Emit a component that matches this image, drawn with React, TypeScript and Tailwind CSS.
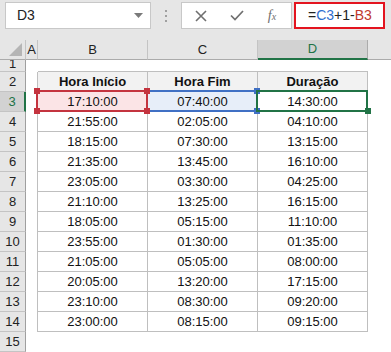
import React from "react";

const data: [string, string, string][] = [
  ["17:10:00", "07:40:00", "14:30:00"],
  ["21:55:00", "02:05:00", "04:10:00"],
  ["18:15:00", "07:30:00", "13:15:00"],
  ["21:35:00", "13:45:00", "16:10:00"],
  ["23:05:00", "03:30:00", "04:25:00"],
  ["21:10:00", "13:25:00", "16:15:00"],
  ["18:05:00", "05:15:00", "11:10:00"],
  ["23:55:00", "01:30:00", "01:35:00"],
  ["21:05:00", "05:05:00", "08:00:00"],
  ["20:05:00", "13:20:00", "17:15:00"],
  ["23:10:00", "08:30:00", "09:20:00"],
  ["23:00:00", "08:15:00", "09:15:00"],
];

function Handle({ pos, color }: { pos: string; color: string }) {
  return <div className={`absolute w-[6px] h-[6px] ${pos} ${color}`} />;
}

function RowHeader({ n, selected, h }: { n: number; selected?: boolean; h?: string }) {
  return (
    <div
      className={`flex justify-center overflow-hidden border-b border-[#c4c4c4] text-[13px] ${
        selected
          ? "bg-[#d2d2d2] text-[#217346] border-r-2 border-r-[#217346]"
          : "bg-[#e6e6e6] text-[#222] border-r border-r-[#9f9f9f]"
      } ${h === "row1" ? "items-start" : "items-center"}`}
    >
      <span className={h === "row1" ? "-mt-[5px] leading-[17px]" : "leading-[17px]"}>{n}</span>
    </div>
  );
}

export default function App() {
  return (
    <div className="w-[391px] h-[352px] overflow-hidden bg-white font-['Liberation_Sans',Arial,sans-serif] text-[#111]">
      {/* Formula bar */}
      <div className="h-[40px] bg-[#e6e6e6] flex items-start pt-[2px]">
        <div className="ml-[5px] w-[146px] h-[27px] bg-white border border-[#c8c8c8] flex items-center justify-between pl-[11px] pr-[7px]">
          <span className="text-[14px] text-[#222]">D3</span>
          <svg width="9" height="5" viewBox="0 0 9 5">
            <path d="M0 0 L9 0 L4.5 5 Z" fill="#7a7a7a" />
          </svg>
        </div>
        <div className="w-[30px] h-[27px] flex flex-col items-center justify-center gap-[3px]">
          <div className="w-[2px] h-[2px] bg-[#a0a0a0]" />
          <div className="w-[2px] h-[2px] bg-[#a0a0a0]" />
          <div className="w-[2px] h-[2px] bg-[#a0a0a0]" />
        </div>
        <div className="w-[111px] h-[27px] bg-white border border-[#c8c8c8] flex items-center">
          <div className="w-[38px] flex justify-center">
            <svg width="12" height="12" viewBox="0 0 12 12">
              <path d="M1 1 L11 11 M11 1 L1 11" stroke="#6f6f6f" strokeWidth="1.6" />
            </svg>
          </div>
          <div className="w-[34px] flex justify-center">
            <svg width="14" height="11" viewBox="0 0 14 11">
              <path d="M1 5.5 L5 9.5 L13 1" stroke="#6f6f6f" strokeWidth="1.7" fill="none" />
            </svg>
          </div>
          <div className="w-[36px] flex justify-center">
            <span className="font-['Liberation_Serif',serif] italic text-[#6f6f6f] text-[14px] leading-none">
              f<span className="text-[10px]">x</span>
            </span>
          </div>
        </div>
        <div className="ml-[2px] w-[91px] h-[27px] bg-white border-2 border-[#e3141f] flex items-center pl-[12px] text-[14px]">
          <span className="text-[#222]">=</span>
          <span className="text-[#2f6fcf]">C3</span>
          <span className="text-[#222]">+1-</span>
          <span className="text-[#c0392b]">B3</span>
        </div>
      </div>

      {/* Sheet */}
      <div className="grid grid-cols-[26px_12px_110px_110px_110px_1fr] grid-rows-[20px_12px_repeat(14,20px)]">
        {/* Column headers */}
        <div className="bg-[#e6e6e6] border-b border-b-[#ababab] border-r border-r-[#c4c4c4] relative">
          <svg className="absolute right-[3px] bottom-[3px]" width="13" height="13" viewBox="0 0 13 13">
            <path d="M13 0 L13 13 L0 13 Z" fill="#b5b5b5" />
          </svg>
        </div>
        <div className="bg-[#e6e6e6] border-b border-b-[#ababab] border-r border-r-[#c4c4c4] flex items-center justify-center text-[13px] text-[#222]">
          A
        </div>
        <div className="bg-[#e6e6e6] border-b border-b-[#ababab] border-r border-r-[#c4c4c4] flex items-center justify-center text-[13px] text-[#222]">
          B
        </div>
        <div className="bg-[#e6e6e6] border-b border-b-[#ababab] border-r border-r-[#c4c4c4] flex items-center justify-center text-[13px] text-[#222]">
          C
        </div>
        <div className="bg-[#d2d2d2] border-b-2 border-b-[#217346] border-r border-r-[#ababab] flex items-center justify-center text-[13px] text-[#217346]">
          D
        </div>
        <div className="bg-[#e6e6e6] border-b border-b-[#ababab]" />

        {/* Row 1 */}
        <RowHeader n={1} h="row1" />
        <div />
        <div className="border-b border-[#bfbfbf]" />
        <div className="border-b border-[#bfbfbf]" />
        <div className="border-b border-[#bfbfbf]" />
        <div />

        {/* Row 2 header */}
        <RowHeader n={2} />
        <div className="border-r border-[#bfbfbf]" />
        {["Hora Início", "Hora Fim", "Duração"].map((t) => (
          <div
            key={t}
            className="bg-[#f2f2f2] border-r border-b border-[#bfbfbf] flex items-center justify-center font-bold text-[13px] text-[#111]"
          >
            {t}
          </div>
        ))}
        <div />

        {data.map((r, i) => {
          const n = i + 3;
          const sel = i === 0;
          return (
            <React.Fragment key={n}>
              <RowHeader n={n} selected={sel} />
              <div className="border-r border-[#bfbfbf]" />
              <div
                className={`relative border-r border-b border-[#bfbfbf] flex items-center justify-center text-[13px] ${
                  sel ? "bg-[#fbe4e6] z-20" : ""
                }`}
              >
                {r[0]}
                {sel && (
                  <>
                    <div className="absolute -left-[2px] -top-[2px] -right-[1px] -bottom-[1px] border-2 border-[#c4343f]" />
                    <Handle pos="-left-[4px] -top-[4px]" color="bg-[#c4343f]" />
                    <Handle pos="-right-[3px] -top-[4px]" color="bg-[#c4343f]" />
                    <Handle pos="-left-[4px] -bottom-[3px]" color="bg-[#c4343f]" />
                    <Handle pos="-right-[3px] -bottom-[3px]" color="bg-[#c4343f]" />
                  </>
                )}
              </div>
              <div
                className={`relative border-r border-b border-[#bfbfbf] flex items-center justify-center text-[13px] ${
                  sel ? "bg-[#e7eef9] z-10" : ""
                }`}
              >
                {r[1]}
                {sel && (
                  <>
                    <div className="absolute -left-[2px] -top-[2px] -right-[1px] -bottom-[1px] border-2 border-[#4070c4]" />
                    <Handle pos="-right-[3px] -top-[4px]" color="bg-[#4070c4]" />
                    <Handle pos="-right-[3px] -bottom-[3px]" color="bg-[#4070c4]" />
                  </>
                )}
              </div>
              <div
                className={`relative border-r border-b border-[#bfbfbf] flex items-center justify-center text-[13px] ${
                  sel ? "z-30" : ""
                }`}
              >
                {r[2]}
                {sel && (
                  <>
                    <div className="absolute -left-[2px] -top-[2px] -right-[1px] -bottom-[1px] border-2 border-[#217346]" />
                    <div className="absolute -right-[4px] -bottom-[3px] w-[6px] h-[6px] bg-[#217346]" />
                  </>
                )}
              </div>
              <div />
            </React.Fragment>
          );
        })}

        {/* Row 15 */}
        <RowHeader n={15} />
        <div />
        <div />
        <div />
        <div />
        <div />
      </div>
    </div>
  );
}
